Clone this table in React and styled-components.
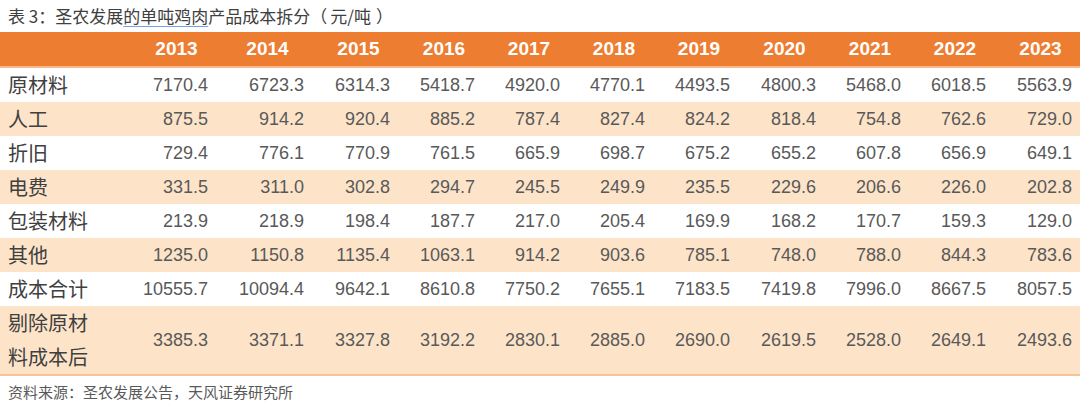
import React from 'react';
import styled, { createGlobalStyle } from 'styled-components';

const GlobalStyle = createGlobalStyle`
    html, body {
        margin: 0;
        padding: 0;
        background: #ffffff;
    }
    body {
        font-family: 'Liberation Sans', 'Noto Sans CJK SC', sans-serif;
    }
`;

const COLS = '130px 86px 96px 86px 85px 85px 85px 85px 86px 85px 85px 86px';

const Wrapper = styled.div`
    width: 1080px;
    height: 406px;
    display: flex;
    flex-direction: column;
    background: #ffffff;
`;

const Title = styled.div`
    height: 32px;
    line-height: 31px;
    padding-left: 8px;
    font-family: 'Noto Sans CJK SC', sans-serif;
    font-size: 17px;
    color: #404040;
    white-space: nowrap;
`;

const Marked = styled.span`
    text-decoration: underline;
    text-decoration-color: #7f9de6;
    text-decoration-thickness: 1px;
    text-underline-offset: 3px;
`;

// the source document sets its brackets centred, with air on both sides
const Paren = styled.span`
    margin: ${props => (props.$open ? '0 3px 0 0' : '0 0 0 5px')};
`;

const HeaderRow = styled.div`
    display: grid;
    grid-template-columns: ${COLS};
    height: 34px;
    background: #ed7d31;
    border-bottom: 2px solid #f6b88c;
`;

const HeadCell = styled.div`
    display: flex;
    align-items: center;
    justify-content: center;
    padding-left: 7px;
    color: #ffffff;
    font-family: 'Liberation Sans', sans-serif;
    font-weight: bold;
    font-size: 19px;
`;

const Row = styled.div`
    display: grid;
    grid-template-columns: ${COLS};
    height: ${props => (props.$tall ? '68px' : '34px')};
    background: ${props => (props.$shade ? '#fde4c9' : '#ffffff')};
`;

const Label = styled.div`
    display: flex;
    align-items: center;
    padding-left: 8px;
    font-family: 'Noto Sans CJK SC', sans-serif;
    font-size: 20px;
    line-height: 34px;
    color: #404040;
`;

const Value = styled.div`
    display: flex;
    align-items: center;
    justify-content: flex-end;
    padding-right: 8px;
    font-family: 'Liberation Sans', sans-serif;
    font-size: 18px;
    color: #595959;
`;

const BottomLine = styled.div`
    height: 2px;
    background: #f6c39c;
`;

const Source = styled.div`
    flex: 1;
    display: flex;
    align-items: center;
    padding-left: 8px;
    font-family: 'Noto Sans CJK SC', sans-serif;
    font-size: 15px;
    color: #595959;
`;

const YEARS = ['2013', '2014', '2015', '2016', '2017', '2018', '2019', '2020', '2021', '2022', '2023'];

const ROWS = [
    { name: '原材料', values: ['7170.4', '6723.3', '6314.3', '5418.7', '4920.0', '4770.1', '4493.5', '4800.3', '5468.0', '6018.5', '5563.9'] },
    { name: '人工', values: ['875.5', '914.2', '920.4', '885.2', '787.4', '827.4', '824.2', '818.4', '754.8', '762.6', '729.0'] },
    { name: '折旧', values: ['729.4', '776.1', '770.9', '761.5', '665.9', '698.7', '675.2', '655.2', '607.8', '656.9', '649.1'] },
    { name: '电费', values: ['331.5', '311.0', '302.8', '294.7', '245.5', '249.9', '235.5', '229.6', '206.6', '226.0', '202.8'] },
    { name: '包装材料', values: ['213.9', '218.9', '198.4', '187.7', '217.0', '205.4', '169.9', '168.2', '170.7', '159.3', '129.0'] },
    { name: '其他', values: ['1235.0', '1150.8', '1135.4', '1063.1', '914.2', '903.6', '785.1', '748.0', '788.0', '844.3', '783.6'] },
    { name: '成本合计', values: ['10555.7', '10094.4', '9642.1', '8610.8', '7750.2', '7655.1', '7183.5', '7419.8', '7996.0', '8667.5', '8057.5'] },
    { name: '剔除原材料成本后', tall: true, values: ['3385.3', '3371.1', '3327.8', '3192.2', '2830.1', '2885.0', '2690.0', '2619.5', '2528.0', '2649.1', '2493.6'] },
];

const App = () => {
    return (
        <>
            <GlobalStyle />
            <Wrapper>
                <Title>
                    表 3：圣农发展<Marked>的单吨鸡肉</Marked>产品成本拆分<Paren $open>（</Paren>元/吨<Paren>）</Paren>
                </Title>
                <HeaderRow>
                    <HeadCell />
                    {YEARS.map(y => (
                        <HeadCell key={y}>{y}</HeadCell>
                    ))}
                </HeaderRow>
                {ROWS.map((r, i) => (
                    <Row key={r.name} $shade={i % 2 === 1} $tall={r.tall}>
                        <Label>{r.tall ? <span>剔除原材<br />料成本后</span> : r.name}</Label>
                        {r.values.map((v, j) => (
                            <Value key={j}>{v}</Value>
                        ))}
                    </Row>
                ))}
                <BottomLine />
                <Source>资料来源：圣农发展公告，天风证券研究所</Source>
            </Wrapper>
        </>
    );
};

export default App;
